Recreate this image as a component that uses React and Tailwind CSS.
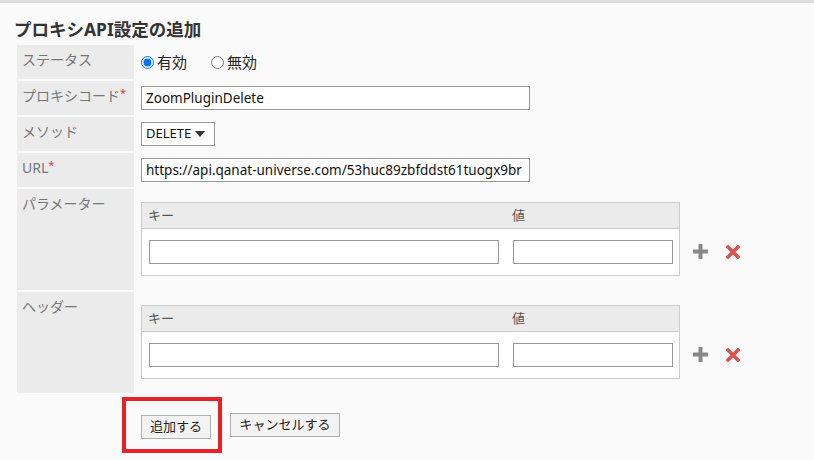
import React from "react";

const font = { fontFamily: '"Noto Sans", "Noto Sans CJK JP", sans-serif' };

function Plus() {
  return (
    <svg width="15" height="15" viewBox="0 0 15 15">
      <rect x="5.5" y="0" width="4" height="15" fill="#888" />
      <rect x="0" y="5.5" width="15" height="4" fill="#888" />
    </svg>
  );
}

function Cross() {
  return (
    <svg width="14" height="14" viewBox="0 0 14 14">
      <path d="M2 2 L12 12 M12 2 L2 12" stroke="#d9534f" strokeWidth="3.6" strokeLinecap="square" />
    </svg>
  );
}

function Label({ children, req }) {
  return (
    <div className="w-[117px] shrink-0 bg-[#ebebeb] pl-[5px] pt-[5px] text-[14px] leading-[20px] text-[#777]">
      {children}
      {req && <span className="relative -top-[4px] text-[11px] text-[#e0393e]">*</span>}
    </div>
  );
}

function KVTable() {
  return (
    <div className="flex items-end">
      <div className="w-[539px] border border-[#ccc] bg-white">
        <div className="flex h-[26px] items-center border-b border-[#ccc] bg-[#ebebeb] text-[13px] text-[#555]">
          <div className="w-[364px] pl-[6px]">キー</div>
          <div className="pl-[6px]">値</div>
        </div>
        <div className="flex h-[46px] items-center">
          <div className="w-[364px] pl-[7px]">
            <input className="h-[24px] w-[350px] border border-[#999] bg-white" />
          </div>
          <div className="pl-[7px]">
            <input className="h-[24px] w-[160px] border border-[#999] bg-white" />
          </div>
        </div>
      </div>
      <div className="mb-[17px] ml-[13px] flex items-center">
        <Plus />
      </div>
      <div className="mb-[17px] ml-[18px] flex items-center">
        <Cross />
      </div>
    </div>
  );
}

export default function App() {
  return (
    <div className="h-[460px] w-[814px] overflow-hidden border-t-[3px] border-[#ddd] bg-[#fafafa]" style={font}>
      <h1 className="mt-[13px] pl-[14px] text-[17.5px] font-bold leading-[26px] text-[#333]">
        プロキシAPI設定の追加
      </h1>
      <div className="mt-[3px] flex flex-col gap-[2px] pl-[17px]">
        <div className="flex h-[34px]">
          <Label>ステータス</Label>
          <div className="flex items-center pl-[7px] text-[15px] text-[#222]">
            <label className="flex items-center">
              <input type="radio" name="st" defaultChecked className="m-0 h-[13px] w-[13px]" />
              <span className="ml-[3px]">有効</span>
            </label>
            <label className="ml-[24px] flex items-center">
              <input type="radio" name="st" className="m-0 h-[13px] w-[13px]" />
              <span className="ml-[3px]">無効</span>
            </label>
          </div>
        </div>
        <div className="flex h-[34px]">
          <Label req>プロキシコード</Label>
          <div className="flex items-center pl-[7px]">
            <input
              defaultValue="ZoomPluginDelete"
              className="h-[24px] w-[389px] border border-[#999] bg-white px-[4px] text-[13.5px] text-[#111]"
            />
          </div>
        </div>
        <div className="flex h-[34px]">
          <Label>メソッド</Label>
          <div className="flex items-center pl-[7px]">
            <div className="flex h-[24px] w-[74px] items-center border border-[#999] bg-white pl-[4px] text-[13px] text-[#111]">
              DELETE
              <svg width="10" height="6" viewBox="0 0 10 6" className="ml-[4px]">
                <path d="M0 0 L10 0 L5 6 Z" fill="#333" />
              </svg>
            </div>
          </div>
        </div>
        <div className="flex h-[34px]">
          <Label req>URL</Label>
          <div className="flex items-center pl-[7px]">
            <input
              defaultValue="https://api.qanat-universe.com/53huc89zbfddst61tuogx9br"
              className="h-[24px] w-[389px] border border-[#999] bg-white px-[4px] text-[13.5px] text-[#111]"
            />
          </div>
        </div>
        <div className="flex h-[101px]">
          <Label>パラメーター</Label>
          <div className="pl-[7px] pt-[13px]">
            <KVTable />
          </div>
        </div>
        <div className="flex h-[101px]">
          <Label>ヘッダー</Label>
          <div className="pl-[7px] pt-[13px]">
            <KVTable />
          </div>
        </div>
      </div>
      <div className="mt-[20px] flex gap-[19px] pl-[141px]">
        <div className="relative">
          <button className="h-[24px] w-[70px] border border-[#b0b0b0] bg-[#f3f3f3] text-[13px] text-[#222]">
            追加する
          </button>
          <div className="absolute -left-[19px] -top-[16px] h-[56px] w-[100px] border-[4px] border-[#e8202a]" />
        </div>
        <button className="h-[24px] w-[110px] border border-[#b0b0b0] bg-[#f3f3f3] text-[13px] text-[#222]">
          キャンセルする
        </button>
      </div>
    </div>
  );
}
